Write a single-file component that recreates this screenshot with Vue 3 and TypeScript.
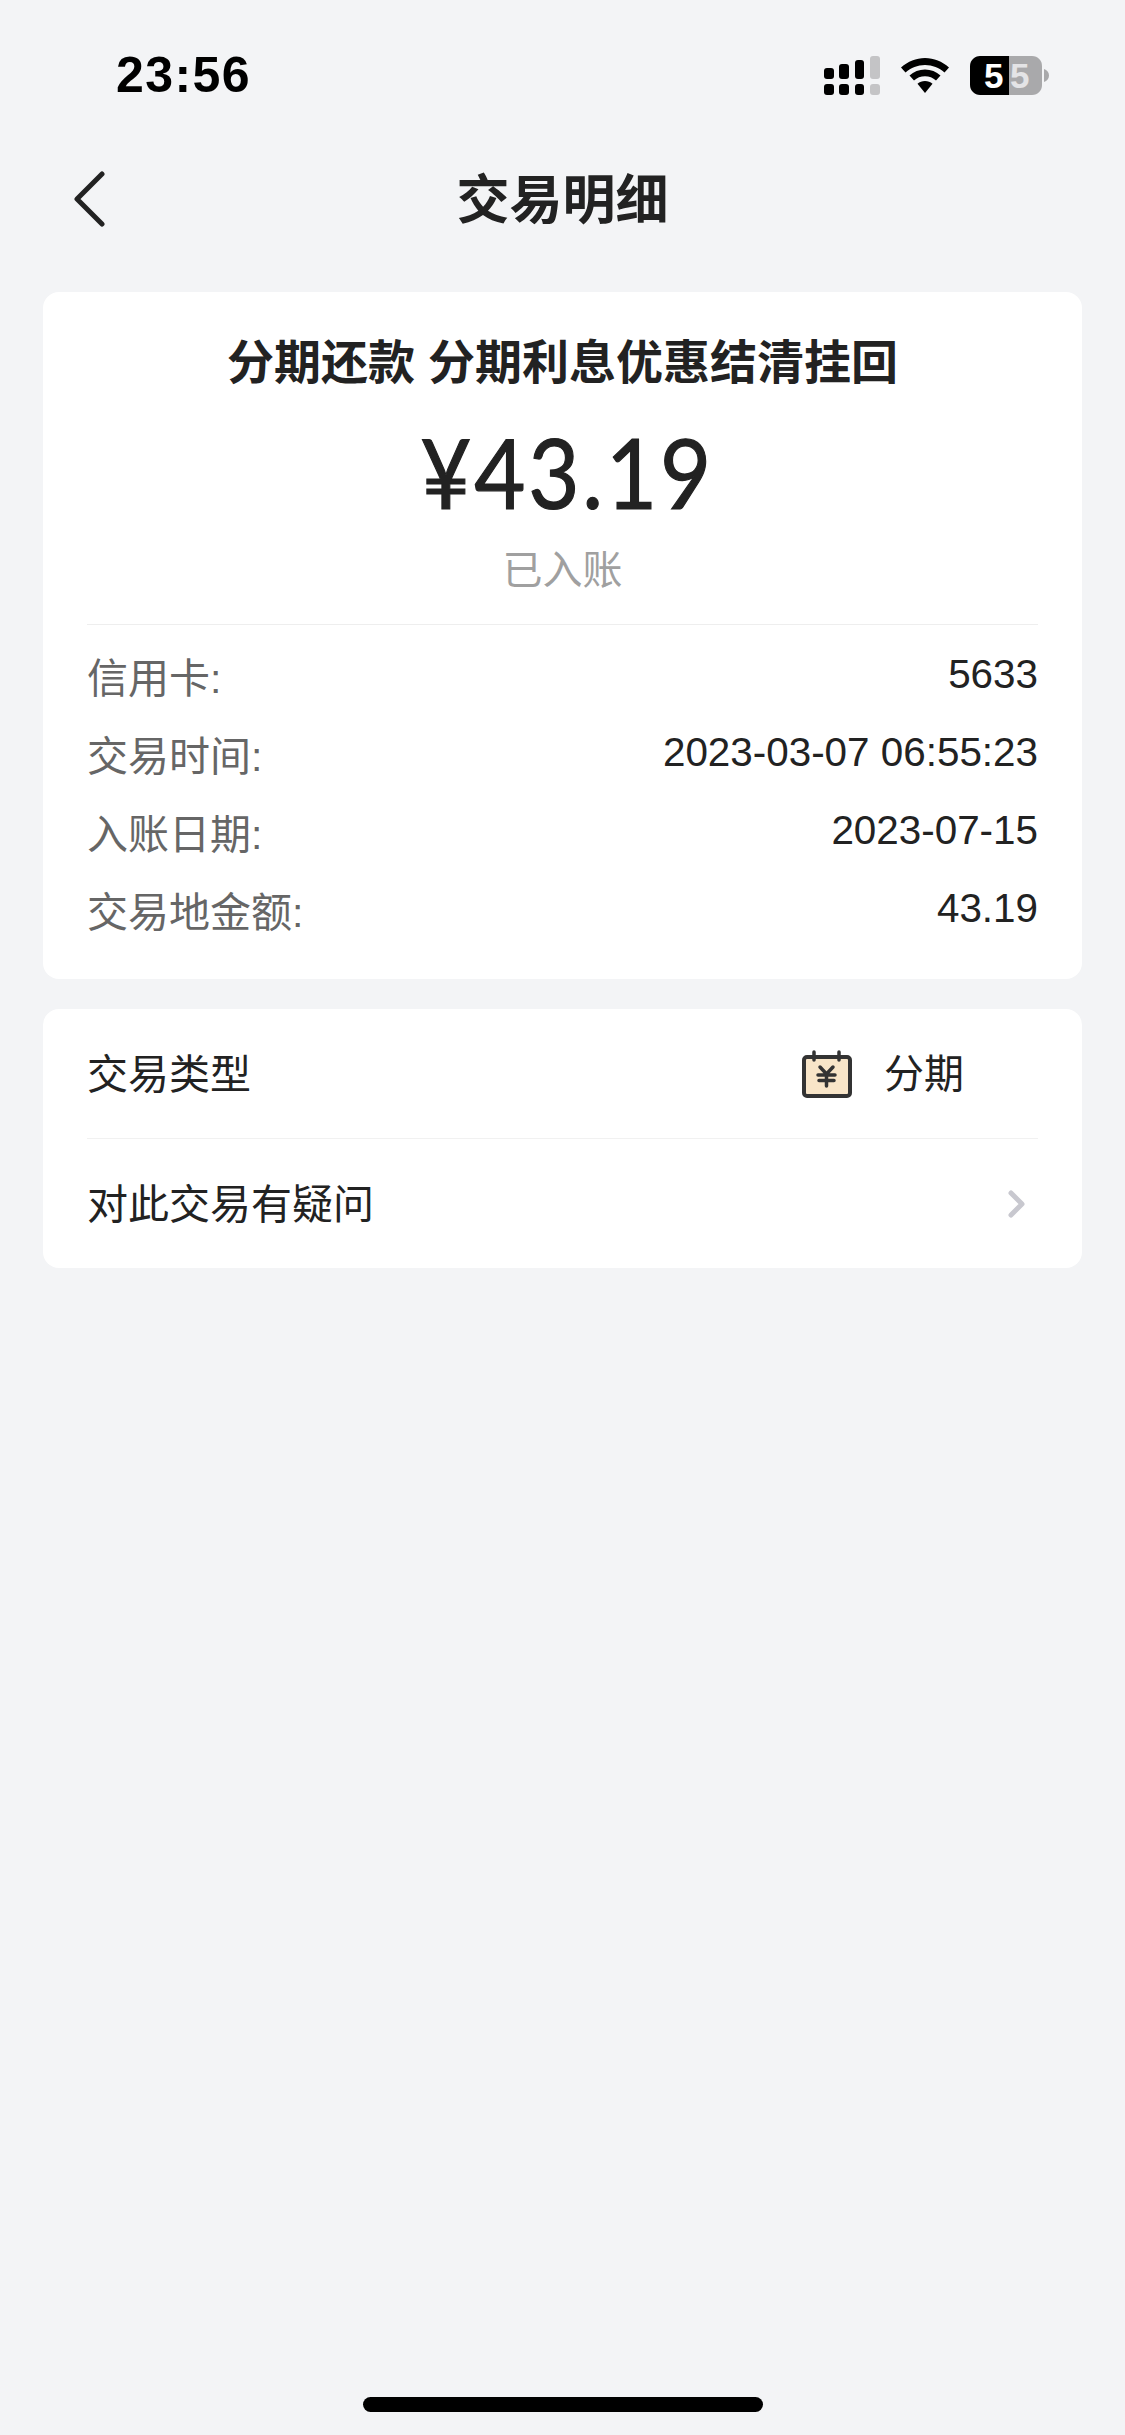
<script setup lang="ts">
const details = [
  { label: '信用卡:', value: '5633' },
  { label: '交易时间:', value: '2023-03-07 06:55:23' },
  { label: '入账日期:', value: '2023-07-15' },
  { label: '交易地金额:', value: '43.19' },
]
</script>

<template>
  <div class="page">
    <div class="status-bar">
      <span class="time">23:56</span>
      <div class="status-icons">
        <svg class="signal" width="56" height="39" viewBox="0 0 56 39">
          <rect x="0" y="12" width="10" height="11" rx="3" fill="#000" />
          <rect x="15" y="8" width="10" height="15" rx="3" fill="#000" />
          <rect x="31" y="4" width="9" height="19" rx="3" fill="#000" />
          <rect x="46" y="0" width="10" height="23" rx="3" fill="#c4c4c6" />
          <rect x="0" y="28" width="10" height="11" rx="3" fill="#000" />
          <rect x="15" y="28" width="10" height="11" rx="3" fill="#000" />
          <rect x="31" y="28" width="9" height="11" rx="3" fill="#000" />
          <rect x="46" y="28" width="10" height="11" rx="3" fill="#c4c4c6" />
        </svg>
        <svg class="wifi" width="48" height="35" viewBox="0 0 48 35">
          <path d="M24 0C15 0 7 3.500 0 9.500L4.500 14.500C10 9.800 16.500 7 24 7C31.500 7 38 9.800 43.500 14.500L48 9.500C41 3.500 33 0 24 0Z" fill="#000" />
          <path d="M24 11.500C18 11.500 12.800 13.700 8.500 17.500L13 22.500C16 19.800 19.800 18.300 24 18.300C28.200 18.300 32 19.800 35 22.500L39.500 17.500C35.200 13.700 30 11.500 24 11.500Z" fill="#000" />
          <path d="M24 23C21 23 18.700 24 16.500 25.800L24 35L31.500 25.800C29.300 24 27 23 24 23Z" fill="#000" />
        </svg>
        <svg class="battery" width="79" height="39" viewBox="0 0 79 39">
          <path d="M39 0H62C68 0 72 4.500 72 10V29C72 34.500 68 39 62 39H39Z" fill="#a9a9ab" />
          <path d="M10 0H39V39H10C4.500 39 0 34.500 0 29V10C0 4.500 4.500 0 10 0Z" fill="#000" />
          <path d="M74 13C77 14 79 16.500 79 19.500C79 22.500 77 25 74 26Z" fill="#a9a9ab" />
          <text x="14" y="32" class="battery-num" fill="#fff">5</text>
          <text x="40" y="32" class="battery-num" fill="#e4e4e6">5</text>
        </svg>
      </div>
    </div>

    <div class="nav">
      <svg class="back" width="34" height="56" viewBox="0 0 34 56">
        <path d="M30 3L5 28L30 53" fill="none" stroke="#222" stroke-width="5" stroke-linecap="round" stroke-linejoin="round" />
      </svg>
      <span class="nav-title">交易明细</span>
    </div>

    <div class="card summary">
      <div class="summary-title">分期还款 分期利息优惠结清挂回</div>
      <div class="amount">¥43.19</div>
      <div class="state">已入账</div>
      <div class="details">
        <div v-for="item in details" :key="item.label" class="detail-row">
          <span class="detail-label">{{ item.label }}</span>
          <span class="detail-value">{{ item.value }}</span>
        </div>
      </div>
    </div>

    <div class="card actions">
      <div class="action-row bordered">
        <span>交易类型</span>
        <div class="type-value">
          <svg class="type-icon" width="50" height="48" viewBox="0 0 50 48">
            <rect x="2" y="7" width="46" height="39" rx="3" fill="#f8e5c8" stroke="#333" stroke-width="4" />
            <path d="M12 2V10M37 2V10" stroke="#333" stroke-width="3.500" stroke-linecap="round" />
            <path d="M18 17L24.500 24L31 17M16 25H33M17 30.500H32M24.500 24V36" fill="none" stroke="#333" stroke-width="3.500" stroke-linecap="round" />
          </svg>
          <span>分期</span>
        </div>
      </div>
      <div class="action-row">
        <span>对此交易有疑问</span>
        <svg class="chevron" width="18" height="28" viewBox="0 0 18 28">
          <path d="M3 3L14 14L3 25" fill="none" stroke="#c8c8cf" stroke-width="5" stroke-linecap="round" stroke-linejoin="round" />
        </svg>
      </div>
    </div>

    <div class="home-bar"></div>
  </div>
</template>

<style scoped>
.page {
  position: relative;
  width: 1125px;
  height: 2435px;
  overflow: hidden;
  background: #f3f4f6;
  color: #222;
  font-family: "Liberation Sans", "Noto Sans CJK SC", sans-serif;
}

.status-bar {
  display: flex;
  justify-content: space-between;
  align-items: center;
  height: 150px;
  padding: 0 76px 0 116px;
  box-sizing: border-box;
}

.time {
  font-size: 50px;
  font-weight: 700;
  color: #000;
  letter-spacing: 1.4px;
}

.status-icons {
  display: flex;
  align-items: center;
  gap: 21px;
  margin-left: -2px;
}

.battery-num {
  font-family: "Liberation Sans", sans-serif;
  font-size: 35px;
  font-weight: 700;
}

.nav {
  position: relative;
  display: flex;
  justify-content: center;
  align-items: center;
  height: 100px;
  padding-bottom: 9px;
  box-sizing: border-box;
  margin-bottom: 42px;
}

.back {
  position: absolute;
  left: 72px;
  top: 21px;
}

.nav-title {
  font-size: 53px;
  font-weight: 700;
}

.card {
  margin: 0 43px;
  background: #fff;
  border-radius: 16px;
}

.summary {
  padding: 0 44px;
  height: 687px;
  box-sizing: border-box;
}

.summary-title {
  padding-top: 38px;
  text-align: center;
  font-size: 47px;
  line-height: 66px;
  font-weight: 700;
}

.amount {
  margin-top: 21px;
  padding-left: 10px;
  text-align: center;
  font-family: Lato, "Liberation Sans", sans-serif;
  font-size: 96px;
  line-height: 110px;
  letter-spacing: 3px;
  -webkit-text-stroke: 1.2px #222;
  transform: scaleX(0.92);
}

.state {
  text-align: center;
  font-size: 40px;
  line-height: 60px;
  color: #a0a0a0;
  margin-top: 13px;
  padding-bottom: 24px;
  border-bottom: 1px solid #eeeeee;
}

.details {
  padding-top: 11px;
}

.detail-row {
  display: flex;
  justify-content: space-between;
  height: 78px;
  align-items: center;
  font-size: 41px;
}

.detail-label {
  color: #666;
}

.detail-value {
  margin-top: -1px;
  font-size: 40.4px;
}

.actions {
  margin-top: 30px;
  padding: 0 44px;
}

.action-row {
  display: flex;
  justify-content: space-between;
  align-items: center;
  height: 129px;
  padding-bottom: 5px;
  box-sizing: border-box;
  font-size: 41px;
}

.bordered {
  height: 130px;
  border-bottom: 1px solid #f1f1f1;
}

.type-value {
  display: flex;
  align-items: center;
  gap: 32px;
  padding-right: 74px;
}

.type-value span {
  font-size: 40px;
}

.type-icon {
  margin-top: 5px;
}

.chevron {
  margin-top: 6px;
  margin-right: 12px;
}

.home-bar {
  position: absolute;
  left: 363px;
  top: 2397px;
  width: 400px;
  height: 15px;
  border-radius: 7.500px;
  background: #000;
}
</style>
